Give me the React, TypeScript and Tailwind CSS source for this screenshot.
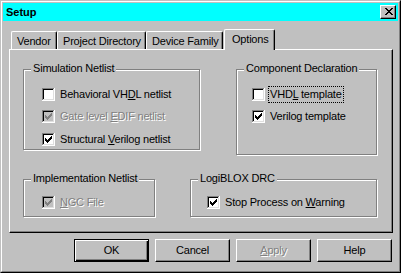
import React from "react";

const CHECK_PTS: [number, number][] = [
  [6, 0], [5, 1], [6, 1], [0, 2], [4, 2], [5, 2], [6, 2],
  [0, 3], [1, 3], [3, 3], [4, 3], [5, 3],
  [0, 4], [1, 4], [2, 4], [3, 4], [4, 4],
  [1, 5], [2, 5], [3, 5], [2, 6],
];

const X_ROWS = ["XX....XX", ".XX..XX.", "..XXXX..", "...XX...", "..XXXX..", ".XX..XX.", "XX....XX"];

function Check({ checked, disabled }: { checked?: boolean; disabled?: boolean }) {
  const bg = disabled ? "#c0c0c0" : "#ffffff";
  const mark = disabled ? "#808080" : "#000000";
  return (
    <svg width="13" height="13" viewBox="0 0 13 13" shapeRendering="crispEdges" className="block shrink-0">
      <rect x="0" y="0" width="12" height="1" fill="#808080" />
      <rect x="0" y="0" width="1" height="12" fill="#808080" />
      <rect x="12" y="0" width="1" height="13" fill="#ffffff" />
      <rect x="0" y="12" width="13" height="1" fill="#ffffff" />
      <rect x="1" y="1" width="10" height="1" fill="#000000" />
      <rect x="1" y="1" width="1" height="10" fill="#000000" />
      <rect x="11" y="1" width="1" height="11" fill="#dfdfdf" />
      <rect x="1" y="11" width="11" height="1" fill="#dfdfdf" />
      <rect x="2" y="2" width="9" height="9" fill={bg} />
      {checked &&
        CHECK_PTS.map(([x, y]) => (
          <rect key={`${x}-${y}`} x={3 + x} y={3 + y} width="1" height="1" fill={mark} />
        ))}
    </svg>
  );
}

function CheckRow({
  checked,
  disabled,
  focus,
  className = "",
  children,
}: {
  checked?: boolean;
  disabled?: boolean;
  focus?: boolean;
  className?: string;
  children: React.ReactNode;
}) {
  return (
    <div className={`flex h-[13px] items-center ${className}`}>
      <Check checked={checked} disabled={disabled} />
      <span
        className={`ml-[3px] whitespace-nowrap border px-[1px] py-[1px] ${
          focus ? "border-dotted border-black" : "border-transparent"
        } ${disabled ? "text-[#808080] [text-shadow:1px_1px_0_#ffffff]" : ""}`}
      >
        {children}
      </span>
    </div>
  );
}

function Group({
  label,
  className = "",
  children,
}: {
  label: string;
  className?: string;
  children?: React.ReactNode;
}) {
  return (
    <div
      className={`relative shrink-0 border border-[#808080] shadow-[inset_1px_1px_0_#ffffff,1px_1px_0_#ffffff] ${className}`}
    >
      <span className="absolute left-[7px] top-[-8px] whitespace-nowrap bg-[#c0c0c0] px-[2px] leading-[13px]">
        {label}
      </span>
      {children}
    </div>
  );
}

function Tab({ label, width, selected }: { label: string; width: string; selected?: boolean }) {
  return (
    <div
      className={`${width} shrink-0 whitespace-nowrap border-l border-t border-r border-l-white border-t-white border-r-black bg-[#c0c0c0] shadow-[inset_-1px_0_0_#808080] pt-[3px] rounded-tl-[2px] rounded-tr-[2px] ${
        selected ? "h-[21px] mb-[-1px] ml-[1px] pl-[7px] relative z-10" : "h-[18px] pl-[5px]"
      }`}
    >
      {label}
    </div>
  );
}

function Button({
  children,
  isDefault,
  disabled,
}: {
  children: React.ReactNode;
  isDefault?: boolean;
  disabled?: boolean;
}) {
  const frame = isDefault
    ? "border border-black shadow-[inset_1px_1px_0_#ffffff,inset_-1px_-1px_0_#000000,inset_-2px_-2px_0_#808080]"
    : "border border-t-white border-l-white border-r-black border-b-black shadow-[inset_-1px_-1px_0_#808080]";
  return (
    <div
      className={`flex h-[23px] w-[75px] shrink-0 items-center justify-center bg-[#c0c0c0] ${frame} ${
        disabled ? "text-[#808080] [text-shadow:1px_1px_0_#ffffff]" : ""
      }`}
    >
      {children}
    </div>
  );
}

export default function App() {
  return (
    <div className="h-[273px] w-[401px] overflow-hidden border border-t-[#c0c0c0] border-l-[#c0c0c0] border-r-black border-b-black bg-[#c0c0c0] font-['Liberation_Sans',Arial,sans-serif] text-[11px] leading-[13px] tracking-[-0.2px] text-black">
      <div className="flex h-full flex-col border border-t-white border-l-white border-r-[#808080] border-b-[#808080] p-[1px]">
        {/* Title bar */}
        <div className="flex h-[18px] shrink-0 items-center justify-between bg-[#00ffff] pl-[3px] pr-[2px]">
          <span className="font-bold tracking-[0px]">Setup</span>
          <div className="h-[14px] w-[16px] border border-t-white border-l-white border-r-black border-b-black bg-[#c0c0c0] pl-[4px] pt-[2px] shadow-[inset_-1px_-1px_0_#808080]">
            <svg width="8" height="7" viewBox="0 0 8 7" shapeRendering="crispEdges" className="block">
              {X_ROWS.flatMap((row, y) =>
                row.split("").map((c, x) =>
                  c === "X" ? <rect key={`${x}-${y}`} x={x} y={y} width="1" height="1" fill="#000000" /> : null
                )
              )}
            </svg>
          </div>
        </div>

        {/* Tabs */}
        <div className="relative z-10 ml-[8px] mt-[8px] flex h-[20px] items-end">
          <Tab label="Vendor" width="w-[46px]" />
          <Tab label="Project Directory" width="w-[89px]" />
          <Tab label="Device Family" width="w-[77px]" />
          <Tab label="Options" width="w-[51px]" selected />
        </div>

        {/* Panel */}
        <div className="ml-[6px] h-[184px] w-[384px] shrink-0 border border-t-white border-l-white border-r-black border-b-black shadow-[inset_-1px_-1px_0_#808080]">
          <div className="ml-[13px] mt-[19px] flex items-start gap-[36px]">
            <Group label="Simulation Netlist" className="h-[81px] w-[177px] pl-[18px] pt-[18px]">
              <CheckRow>
                Behavioral VH<u>D</u>L netlist
              </CheckRow>
              <CheckRow checked disabled className="mt-[9px]">
                Gate level <u>E</u>DIF netlist
              </CheckRow>
              <CheckRow checked className="mt-[10px]">
                Structural <u>V</u>erilog netlist
              </CheckRow>
            </Group>
            <Group label="Component Declaration" className="h-[86px] w-[141px] pl-[15px] pt-[18px]">
              <CheckRow focus>
                VHD<u>L</u> template
              </CheckRow>
              <CheckRow checked className="mt-[9px]">
                Verilog template
              </CheckRow>
            </Group>
          </div>
          <div className="ml-[13px] mt-[24px] flex items-start gap-[35px]">
            <Group label="Implementation Netlist" className="h-[38px] w-[132px] pl-[18px] pt-[16px]">
              <CheckRow checked disabled>
                <u>N</u>GC File
              </CheckRow>
            </Group>
            <Group label="LogiBLOX DRC" className="h-[38px] w-[187px] pl-[16px] pt-[16px]">
              <CheckRow checked>
                Stop Process on <u>W</u>arning
              </CheckRow>
            </Group>
          </div>
        </div>

        {/* Buttons */}
        <div className="ml-[71px] mt-[6px] flex gap-[6px]">
          <Button isDefault>OK</Button>
          <Button>Cancel</Button>
          <Button disabled>
            <span>
              <u>A</u>pply
            </span>
          </Button>
          <Button>Help</Button>
        </div>
      </div>
    </div>
  );
}
